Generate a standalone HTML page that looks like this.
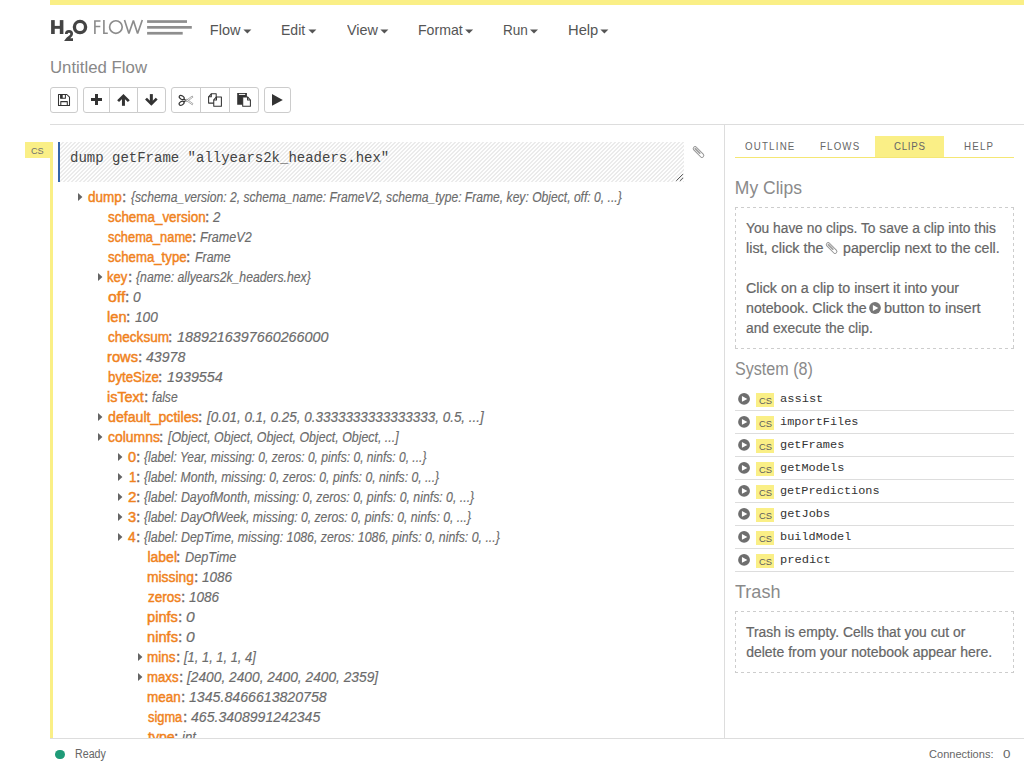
<!DOCTYPE html>
<html>
<head>
<meta charset="utf-8">
<title>H2O Flow</title>
<style>
*{box-sizing:border-box;margin:0;padding:0}
html,body{width:1024px;height:768px;overflow:hidden;background:#fff}
body{font-family:"Liberation Sans",sans-serif;color:#555;position:relative;font-size:14px}
.abs{position:absolute}
.s{position:absolute;white-space:nowrap;line-height:20px;height:20px;display:inline-block;transform-origin:0 0}
#topbar{left:50px;top:0;width:974px;height:5px;background:#faef86}
.btn{position:absolute;top:87px;height:26px;border:1px solid #ccc;background:#fff}
.btn.first{border-radius:3px 0 0 3px}
.btn.last{border-radius:0 3px 3px 0}
.btn.solo{border-radius:3px}
#hr1{left:50px;top:124px;width:974px;height:1px;background:#ddd}
#vr{left:724px;top:124px;width:1px;height:615px;background:#ddd}
#hr2{left:50px;top:738px;width:974px;height:1px;background:#ddd}
#cslabel{left:25px;top:142px;width:28px;height:16px;background:#faef86}
#csstrip{left:50px;top:142px;width:3px;height:596px;background:#faef86}
#bluebar{left:58px;top:142px;width:2px;height:40px;background:#3565a9}
#input{left:60px;top:142px;width:624px;height:40px;background:repeating-linear-gradient(135deg,#fefefe 0,#fefefe 1.7px,#ebebeb 1.7px,#ebebeb 2.83px)}
.tri{position:absolute;width:0;height:0;border-top:4px solid transparent;border-bottom:4px solid transparent;border-left:5px solid #555}
#tree{left:0;top:0;width:724px;height:738px;overflow:hidden}
#tabon{left:875px;top:136px;width:69px;height:21px;background:#faef86}
#tabline{left:735px;top:157px;width:279px;height:1px;background:#f5e774}
.dash{position:absolute;left:735px;width:280px;border:1px dashed #d2d2d2}
.li{position:absolute;left:735px;width:279px;height:23px;border-bottom:1px solid #ddd}
.li .cs{position:absolute;left:21px;top:5px;width:18px;height:14px;background:#faef86}
#dot{left:55px;top:749.5px;width:9.5px;height:9.5px;border-radius:5px;background:#1f9b78}
</style>
</head>
<body>
<div class="abs" id="topbar"></div>
<div class="btn solo" style="left:50px;width:28px"></div>
<div class="btn first" style="left:83px;width:27px"></div>
<div class="btn" style="left:109px;width:29px"></div>
<div class="btn last" style="left:137px;width:29px"></div>
<div class="btn first" style="left:171px;width:30px"></div>
<div class="btn" style="left:200px;width:30px"></div>
<div class="btn last" style="left:229px;width:30px"></div>
<div class="btn solo" style="left:264px;width:27px"></div>
<div class="abs" id="hr1"></div>
<div class="abs" id="vr"></div>
<div class="abs" id="hr2"></div>
<div class="abs" id="cslabel"></div>
<div class="abs" id="csstrip"></div>
<div class="abs" id="bluebar"></div>
<div class="abs" id="input"></div>
<div class="abs" id="tree">

<span class="s" style="top:186.73px;font-size:14px;color:#f0821c;-webkit-text-stroke:0.45px #f0821c;left:88.43px;transform:scaleX(0.9655);">dump</span>
<span class="s" style="top:186.73px;font-size:14px;color:#6b6b6b;-webkit-text-stroke:0.3px #6b6b6b;left:121.96px;transform:scaleX(1.1176);">:</span>
<span class="s" style="top:186.73px;font-size:14px;color:#6b6b6b;font-style:italic;-webkit-text-stroke:0.15px #6b6b6b;left:130.54px;transform:scaleX(0.8650);">{schema_version: 2, schema_name: FrameV2, schema_type: Frame, key: Object, off: 0, ...}</span>
<span class="s" style="top:206.73px;font-size:14px;color:#f0821c;-webkit-text-stroke:0.45px #f0821c;left:107.98px;transform:scaleX(0.9577);">schema_version</span>
<span class="s" style="top:206.73px;font-size:14px;color:#6b6b6b;-webkit-text-stroke:0.3px #6b6b6b;left:205.06px;transform:scaleX(1.1176);">:</span>
<span class="s" style="top:206.73px;font-size:14px;color:#6b6b6b;font-style:italic;-webkit-text-stroke:0.15px #6b6b6b;left:213.30px;transform:scaleX(0.9470);">2</span>
<span class="s" style="top:226.73px;font-size:14px;color:#f0821c;-webkit-text-stroke:0.45px #f0821c;left:107.99px;transform:scaleX(0.9173);">schema_name</span>
<span class="s" style="top:226.73px;font-size:14px;color:#6b6b6b;-webkit-text-stroke:0.3px #6b6b6b;left:191.96px;transform:scaleX(1.1176);">:</span>
<span class="s" style="top:226.73px;font-size:14px;color:#6b6b6b;font-style:italic;-webkit-text-stroke:0.15px #6b6b6b;left:200.29px;transform:scaleX(0.8977);">FrameV2</span>
<span class="s" style="top:246.74px;font-size:14px;color:#f0821c;-webkit-text-stroke:0.45px #f0821c;left:107.98px;transform:scaleX(0.9439);">schema_type</span>
<span class="s" style="top:246.74px;font-size:14px;color:#6b6b6b;-webkit-text-stroke:0.3px #6b6b6b;left:186.31px;transform:scaleX(1.1176);">:</span>
<span class="s" style="top:246.74px;font-size:14px;color:#6b6b6b;font-style:italic;-webkit-text-stroke:0.15px #6b6b6b;left:194.70px;transform:scaleX(0.8822);">Frame</span>
<span class="s" style="top:266.74px;font-size:14px;color:#f0821c;-webkit-text-stroke:0.45px #f0821c;left:107.46px;transform:scaleX(0.9331);">key</span>
<span class="s" style="top:266.74px;font-size:14px;color:#6b6b6b;-webkit-text-stroke:0.3px #6b6b6b;left:128.06px;transform:scaleX(1.1176);">:</span>
<span class="s" style="top:266.74px;font-size:14px;color:#6b6b6b;font-style:italic;-webkit-text-stroke:0.15px #6b6b6b;left:135.54px;transform:scaleX(0.8737);">{name: allyears2k_headers.hex}</span>
<span class="s" style="top:286.74px;font-size:14px;color:#f0821c;-webkit-text-stroke:0.45px #f0821c;left:107.72px;transform:scaleX(1.1291);">off</span>
<span class="s" style="top:286.74px;font-size:14px;color:#6b6b6b;-webkit-text-stroke:0.3px #6b6b6b;left:125.36px;transform:scaleX(1.1176);">:</span>
<span class="s" style="top:286.74px;font-size:14px;color:#6b6b6b;font-style:italic;-webkit-text-stroke:0.15px #6b6b6b;left:132.92px;transform:scaleX(0.9877);">0</span>
<span class="s" style="top:306.74px;font-size:14px;color:#f0821c;-webkit-text-stroke:0.45px #f0821c;left:107.38px;transform:scaleX(1.0451);">len</span>
<span class="s" style="top:306.74px;font-size:14px;color:#6b6b6b;-webkit-text-stroke:0.3px #6b6b6b;left:126.31px;transform:scaleX(1.1176);">:</span>
<span class="s" style="top:306.74px;font-size:14px;color:#6b6b6b;font-style:italic;-webkit-text-stroke:0.15px #6b6b6b;left:134.73px;transform:scaleX(0.9752);">100</span>
<span class="s" style="top:326.74px;font-size:14px;color:#f0821c;-webkit-text-stroke:0.45px #f0821c;left:107.78px;transform:scaleX(0.9673);">checksum</span>
<span class="s" style="top:326.74px;font-size:14px;color:#6b6b6b;-webkit-text-stroke:0.3px #6b6b6b;left:168.16px;transform:scaleX(1.1176);">:</span>
<span class="s" style="top:326.74px;font-size:14px;color:#6b6b6b;font-style:italic;-webkit-text-stroke:0.15px #6b6b6b;left:176.62px;transform:scaleX(1.0240);">1889216397660266000</span>
<span class="s" style="top:346.74px;font-size:14px;color:#f0821c;-webkit-text-stroke:0.45px #f0821c;left:107.38px;transform:scaleX(1.0486);">rows</span>
<span class="s" style="top:346.74px;font-size:14px;color:#6b6b6b;-webkit-text-stroke:0.3px #6b6b6b;left:138.16px;transform:scaleX(1.1176);">:</span>
<span class="s" style="top:346.74px;font-size:14px;color:#6b6b6b;font-style:italic;-webkit-text-stroke:0.15px #6b6b6b;left:146.26px;transform:scaleX(1.0091);">43978</span>
<span class="s" style="top:366.74px;font-size:14px;color:#f0821c;-webkit-text-stroke:0.45px #f0821c;left:107.52px;transform:scaleX(0.9482);">byteSize</span>
<span class="s" style="top:366.74px;font-size:14px;color:#6b6b6b;-webkit-text-stroke:0.3px #6b6b6b;left:158.16px;transform:scaleX(1.1176);">:</span>
<span class="s" style="top:366.74px;font-size:14px;color:#6b6b6b;font-style:italic;-webkit-text-stroke:0.15px #6b6b6b;left:166.62px;transform:scaleX(1.0224);">1939554</span>
<span class="s" style="top:386.74px;font-size:14px;color:#f0821c;-webkit-text-stroke:0.45px #f0821c;left:107.40px;transform:scaleX(1.0287);">isText</span>
<span class="s" style="top:386.74px;font-size:14px;color:#6b6b6b;-webkit-text-stroke:0.3px #6b6b6b;left:144.46px;transform:scaleX(1.1176);">:</span>
<span class="s" style="top:386.74px;font-size:14px;color:#6b6b6b;font-style:italic;-webkit-text-stroke:0.15px #6b6b6b;left:152.20px;transform:scaleX(0.8682);">false</span>
<span class="s" style="top:406.74px;font-size:14px;color:#f0821c;-webkit-text-stroke:0.45px #f0821c;left:107.76px;transform:scaleX(1.0123);">default_pctiles</span>
<span class="s" style="top:406.74px;font-size:14px;color:#6b6b6b;-webkit-text-stroke:0.3px #6b6b6b;left:198.16px;transform:scaleX(1.1176);">:</span>
<span class="s" style="top:406.74px;font-size:14px;color:#6b6b6b;font-style:italic;-webkit-text-stroke:0.15px #6b6b6b;left:206.59px;transform:scaleX(0.9610);">[0.01, 0.1, 0.25, 0.3333333333333333, 0.5, ...]</span>
<span class="s" style="top:426.74px;font-size:14px;color:#f0821c;-webkit-text-stroke:0.45px #f0821c;left:107.77px;transform:scaleX(0.9955);">columns</span>
<span class="s" style="top:426.74px;font-size:14px;color:#6b6b6b;-webkit-text-stroke:0.3px #6b6b6b;left:159.46px;transform:scaleX(1.1176);">:</span>
<span class="s" style="top:426.74px;font-size:14px;color:#6b6b6b;font-style:italic;-webkit-text-stroke:0.15px #6b6b6b;left:167.81px;transform:scaleX(0.8847);">[Object, Object, Object, Object, Object, ...]</span>
<span class="s" style="top:446.74px;font-size:14px;color:#f0821c;-webkit-text-stroke:0.45px #f0821c;left:127.83px;transform:scaleX(1.0359);">0</span>
<span class="s" style="top:446.74px;font-size:14px;color:#6b6b6b;-webkit-text-stroke:0.3px #6b6b6b;left:135.66px;transform:scaleX(1.1176);">:</span>
<span class="s" style="top:446.74px;font-size:14px;color:#6b6b6b;font-style:italic;-webkit-text-stroke:0.15px #6b6b6b;left:143.69px;transform:scaleX(0.8607);">{label: Year, missing: 0, zeros: 0, pinfs: 0, ninfs: 0, ...}</span>
<span class="s" style="top:466.74px;font-size:14px;color:#f0821c;-webkit-text-stroke:0.45px #f0821c;left:128.62px;transform:scaleX(0.9480);">1</span>
<span class="s" style="top:466.74px;font-size:14px;color:#6b6b6b;-webkit-text-stroke:0.3px #6b6b6b;left:135.66px;transform:scaleX(1.1176);">:</span>
<span class="s" style="top:466.74px;font-size:14px;color:#6b6b6b;font-style:italic;-webkit-text-stroke:0.15px #6b6b6b;left:143.69px;transform:scaleX(0.8700);">{label: Month, missing: 0, zeros: 0, pinfs: 0, ninfs: 0, ...}</span>
<span class="s" style="top:486.74px;font-size:14px;color:#f0821c;-webkit-text-stroke:0.45px #f0821c;left:127.58px;transform:scaleX(1.0885);">2</span>
<span class="s" style="top:486.74px;font-size:14px;color:#6b6b6b;-webkit-text-stroke:0.3px #6b6b6b;left:135.66px;transform:scaleX(1.1176);">:</span>
<span class="s" style="top:486.74px;font-size:14px;color:#6b6b6b;font-style:italic;-webkit-text-stroke:0.15px #6b6b6b;left:143.69px;transform:scaleX(0.8784);">{label: DayofMonth, missing: 0, zeros: 0, pinfs: 0, ninfs: 0, ...}</span>
<span class="s" style="top:506.74px;font-size:14px;color:#f0821c;-webkit-text-stroke:0.45px #f0821c;left:127.82px;transform:scaleX(1.0460);">3</span>
<span class="s" style="top:506.74px;font-size:14px;color:#6b6b6b;-webkit-text-stroke:0.3px #6b6b6b;left:135.66px;transform:scaleX(1.1176);">:</span>
<span class="s" style="top:506.74px;font-size:14px;color:#6b6b6b;font-style:italic;-webkit-text-stroke:0.15px #6b6b6b;left:143.69px;transform:scaleX(0.8707);">{label: DayOfWeek, missing: 0, zeros: 0, pinfs: 0, ninfs: 0, ...}</span>
<span class="s" style="top:526.74px;font-size:14px;color:#f0821c;-webkit-text-stroke:0.45px #f0821c;left:128.05px;transform:scaleX(0.9881);">4</span>
<span class="s" style="top:526.74px;font-size:14px;color:#6b6b6b;-webkit-text-stroke:0.3px #6b6b6b;left:135.66px;transform:scaleX(1.1176);">:</span>
<span class="s" style="top:526.74px;font-size:14px;color:#6b6b6b;font-style:italic;-webkit-text-stroke:0.15px #6b6b6b;left:143.69px;transform:scaleX(0.8813);">{label: DepTime, missing: 1086, zeros: 1086, pinfs: 0, ninfs: 0, ...}</span>
<span class="s" style="top:546.74px;font-size:14px;color:#f0821c;-webkit-text-stroke:0.45px #f0821c;left:147.42px;">label</span>
<span class="s" style="top:546.74px;font-size:14px;color:#6b6b6b;-webkit-text-stroke:0.3px #6b6b6b;left:176.31px;transform:scaleX(1.1176);">:</span>
<span class="s" style="top:546.74px;font-size:14px;color:#6b6b6b;font-style:italic;-webkit-text-stroke:0.15px #6b6b6b;left:185.29px;transform:scaleX(0.9062);">DepTime</span>
<span class="s" style="top:566.74px;font-size:14px;color:#f0821c;-webkit-text-stroke:0.45px #f0821c;left:147.42px;transform:scaleX(0.9894);">missing</span>
<span class="s" style="top:566.74px;font-size:14px;color:#6b6b6b;-webkit-text-stroke:0.3px #6b6b6b;left:193.81px;transform:scaleX(1.1176);">:</span>
<span class="s" style="top:566.74px;font-size:14px;color:#6b6b6b;font-style:italic;-webkit-text-stroke:0.15px #6b6b6b;left:202.23px;transform:scaleX(0.9678);">1086</span>
<span class="s" style="top:586.74px;font-size:14px;color:#f0821c;-webkit-text-stroke:0.45px #f0821c;left:147.78px;transform:scaleX(0.9663);">zeros</span>
<span class="s" style="top:586.74px;font-size:14px;color:#6b6b6b;-webkit-text-stroke:0.3px #6b6b6b;left:180.66px;transform:scaleX(1.1176);">:</span>
<span class="s" style="top:586.74px;font-size:14px;color:#6b6b6b;font-style:italic;-webkit-text-stroke:0.15px #6b6b6b;left:189.13px;transform:scaleX(0.9678);">1086</span>
<span class="s" style="top:606.74px;font-size:14px;color:#f0821c;-webkit-text-stroke:0.45px #f0821c;left:147.46px;transform:scaleX(1.0456);">pinfs</span>
<span class="s" style="top:606.74px;font-size:14px;color:#6b6b6b;-webkit-text-stroke:0.3px #6b6b6b;left:178.16px;transform:scaleX(1.1176);">:</span>
<span class="s" style="top:606.74px;font-size:14px;color:#6b6b6b;font-style:italic;-webkit-text-stroke:0.15px #6b6b6b;left:185.71px;transform:scaleX(1.1180);">0</span>
<span class="s" style="top:626.74px;font-size:14px;color:#f0821c;-webkit-text-stroke:0.45px #f0821c;left:147.38px;transform:scaleX(1.0481);">ninfs</span>
<span class="s" style="top:626.74px;font-size:14px;color:#6b6b6b;-webkit-text-stroke:0.3px #6b6b6b;left:178.16px;transform:scaleX(1.1176);">:</span>
<span class="s" style="top:626.74px;font-size:14px;color:#6b6b6b;font-style:italic;-webkit-text-stroke:0.15px #6b6b6b;left:185.71px;transform:scaleX(1.1180);">0</span>
<span class="s" style="top:646.74px;font-size:14px;color:#f0821c;-webkit-text-stroke:0.45px #f0821c;left:147.44px;transform:scaleX(0.9612);">mins</span>
<span class="s" style="top:646.74px;font-size:14px;color:#6b6b6b;-webkit-text-stroke:0.3px #6b6b6b;left:175.66px;transform:scaleX(1.1176);">:</span>
<span class="s" style="top:646.74px;font-size:14px;color:#6b6b6b;font-style:italic;-webkit-text-stroke:0.15px #6b6b6b;left:184.08px;transform:scaleX(0.9228);">[1, 1, 1, 1, 4]</span>
<span class="s" style="top:666.74px;font-size:14px;color:#f0821c;-webkit-text-stroke:0.45px #f0821c;left:147.45px;transform:scaleX(0.9431);">maxs</span>
<span class="s" style="top:666.74px;font-size:14px;color:#6b6b6b;-webkit-text-stroke:0.3px #6b6b6b;left:178.81px;transform:scaleX(1.1176);">:</span>
<span class="s" style="top:666.74px;font-size:14px;color:#6b6b6b;font-style:italic;-webkit-text-stroke:0.15px #6b6b6b;left:186.60px;transform:scaleX(0.9820);">[2400, 2400, 2400, 2400, 2359]</span>
<span class="s" style="top:686.74px;font-size:14px;color:#f0821c;-webkit-text-stroke:0.45px #f0821c;left:147.44px;transform:scaleX(0.9643);">mean</span>
<span class="s" style="top:686.74px;font-size:14px;color:#6b6b6b;-webkit-text-stroke:0.3px #6b6b6b;left:180.66px;transform:scaleX(1.1176);">:</span>
<span class="s" style="top:686.74px;font-size:14px;color:#6b6b6b;font-style:italic;-webkit-text-stroke:0.15px #6b6b6b;left:189.12px;transform:scaleX(1.0107);">1345.8466613820758</span>
<span class="s" style="top:706.74px;font-size:14px;color:#f0821c;-webkit-text-stroke:0.45px #f0821c;left:147.99px;transform:scaleX(0.9174);">sigma</span>
<span class="s" style="top:706.74px;font-size:14px;color:#6b6b6b;-webkit-text-stroke:0.3px #6b6b6b;left:182.56px;transform:scaleX(1.1176);">:</span>
<span class="s" style="top:706.74px;font-size:14px;color:#6b6b6b;font-style:italic;-webkit-text-stroke:0.15px #6b6b6b;left:191.26px;transform:scaleX(1.0058);">465.3408991242345</span>
<span class="s" style="top:726.74px;font-size:14px;color:#f0821c;-webkit-text-stroke:0.45px #f0821c;left:148.02px;transform:scaleX(1.0105);">type</span>
<span class="s" style="top:726.74px;font-size:14px;color:#6b6b6b;-webkit-text-stroke:0.3px #6b6b6b;left:174.46px;transform:scaleX(1.1176);">:</span>
<span class="s" style="top:726.74px;font-size:14px;color:#6b6b6b;font-style:italic;-webkit-text-stroke:0.15px #6b6b6b;left:182.37px;transform:scaleX(0.9445);">int</span>
</div>
<div class="abs" id="tabon"></div>
<div class="abs" id="tabline"></div>
<div class="li" style="top:388px"><i class="cs"></i></div>
<div class="li" style="top:411px"><i class="cs"></i></div>
<div class="li" style="top:434px"><i class="cs"></i></div>
<div class="li" style="top:457px"><i class="cs"></i></div>
<div class="li" style="top:480px"><i class="cs"></i></div>
<div class="li" style="top:503px"><i class="cs"></i></div>
<div class="li" style="top:526px"><i class="cs"></i></div>
<div class="li" style="top:549px"><i class="cs"></i></div>
<div class="abs" id="dot"></div>
<span class="s" style="top:19.96px;font-size:14.5px;color:#555;left:209.84px;">Flow</span>
<span class="s" style="top:19.96px;font-size:14.5px;color:#555;left:280.88px;transform:scaleX(0.9670);">Edit</span>
<span class="s" style="top:19.96px;font-size:14.5px;color:#555;left:346.50px;transform:scaleX(0.9933);">View</span>
<span class="s" style="top:19.96px;font-size:14.5px;color:#555;left:417.87px;transform:scaleX(0.9727);">Format</span>
<span class="s" style="top:19.96px;font-size:14.5px;color:#555;left:502.91px;transform:scaleX(0.9367);">Run</span>
<span class="s" style="top:19.96px;font-size:14.5px;color:#555;left:567.82px;transform:scaleX(1.0155);">Help</span>
<span class="s" style="top:56.77px;font-size:17.2px;color:#888;left:49.99px;transform:scaleX(0.9764);">Untitled Flow</span>
<span class="s" style="top:140.77px;font-size:9.3px;color:#707070;left:31.44px;transform:scaleX(0.9864);">CS</span>
<span class="s" style="top:148.25px;font-size:14px;color:#444;font-family:'Liberation Mono',monospace;left:69.99px;">dump getFrame "allyears2k_headers.hex"</span>
<span class="s" style="top:136.45px;font-size:10.8px;color:#666;left:744.56px;letter-spacing:1.337px;transform:scaleX(0.9);">OUTLINE</span>
<span class="s" style="top:136.45px;font-size:10.8px;color:#666;left:819.72px;letter-spacing:1.285px;transform:scaleX(0.9);">FLOWS</span>
<span class="s" style="top:136.45px;font-size:10.8px;color:#666;left:894.01px;letter-spacing:0.778px;transform:scaleX(0.9);">CLIPS</span>
<span class="s" style="top:136.45px;font-size:10.8px;color:#666;left:964.22px;letter-spacing:1.367px;transform:scaleX(0.9);">HELP</span>
<span class="s" style="top:178.02px;font-size:17.5px;color:#8a8a8a;left:734.85px;">My Clips</span>
<span class="s" style="top:358.92px;font-size:17.5px;color:#8a8a8a;left:735.02px;transform:scaleX(0.9210);">System (8)</span>
<span class="s" style="top:582.02px;font-size:17.5px;color:#8a8a8a;left:734.89px;transform:scaleX(1.0313);">Trash</span>
<span class="s" style="top:218.23px;font-size:14px;color:#666;-webkit-text-stroke:0.2px #666;left:746.22px;transform:scaleX(0.9846);">You have no clips. To save a clip into this</span>
<span class="s" style="top:238.13px;font-size:14px;color:#666;-webkit-text-stroke:0.2px #666;left:745.97px;transform:scaleX(1.0273);">list, click the</span>
<span class="s" style="top:238.13px;font-size:14px;color:#666;-webkit-text-stroke:0.2px #666;left:843.05px;transform:scaleX(1.0118);">paperclip next to the cell.</span>
<span class="s" style="top:278.13px;font-size:14px;color:#666;-webkit-text-stroke:0.2px #666;left:745.99px;transform:scaleX(1.0219);">Click on a clip to insert it into your</span>
<span class="s" style="top:298.13px;font-size:14px;color:#666;-webkit-text-stroke:0.2px #666;left:745.78px;transform:scaleX(1.0137);">notebook. Click the</span>
<span class="s" style="top:298.13px;font-size:14px;color:#666;-webkit-text-stroke:0.2px #666;left:884.13px;transform:scaleX(1.0431);">button to insert</span>
<span class="s" style="top:318.13px;font-size:14px;color:#666;-webkit-text-stroke:0.2px #666;left:746.15px;transform:scaleX(0.9871);">and execute the clip.</span>
<span class="s" style="top:622.13px;font-size:14px;color:#666;-webkit-text-stroke:0.2px #666;left:746.32px;transform:scaleX(0.9888);">Trash is empty. Cells that you cut or</span>
<span class="s" style="top:642.13px;font-size:14px;color:#666;-webkit-text-stroke:0.2px #666;left:746.14px;">delete from your notebook appear here.</span>
<span class="s" style="top:388.80px;font-size:11.2px;color:#333;font-family:'Liberation Mono',monospace;left:779.98px;transform:scaleX(1.0759);">assist</span>
<span class="s" style="top:390.79px;font-size:9.8px;color:#5e5e5e;left:758.63px;transform:scaleX(0.9597);">CS</span>
<span class="s" style="top:411.80px;font-size:11.2px;color:#333;font-family:'Liberation Mono',monospace;left:779.93px;transform:scaleX(1.0616);">importFiles</span>
<span class="s" style="top:413.79px;font-size:9.8px;color:#5e5e5e;left:758.63px;transform:scaleX(0.9597);">CS</span>
<span class="s" style="top:434.80px;font-size:11.2px;color:#333;font-family:'Liberation Mono',monospace;left:779.93px;transform:scaleX(1.0641);">getFrames</span>
<span class="s" style="top:436.79px;font-size:9.8px;color:#5e5e5e;left:758.63px;transform:scaleX(0.9597);">CS</span>
<span class="s" style="top:457.80px;font-size:11.2px;color:#333;font-family:'Liberation Mono',monospace;left:779.93px;transform:scaleX(1.0641);">getModels</span>
<span class="s" style="top:459.79px;font-size:9.8px;color:#5e5e5e;left:758.63px;transform:scaleX(0.9597);">CS</span>
<span class="s" style="top:480.80px;font-size:11.2px;color:#333;font-family:'Liberation Mono',monospace;left:779.93px;transform:scaleX(1.0592);">getPredictions</span>
<span class="s" style="top:482.79px;font-size:9.8px;color:#5e5e5e;left:758.63px;transform:scaleX(0.9597);">CS</span>
<span class="s" style="top:503.80px;font-size:11.2px;color:#333;font-family:'Liberation Mono',monospace;left:779.92px;transform:scaleX(1.0682);">getJobs</span>
<span class="s" style="top:505.79px;font-size:9.8px;color:#5e5e5e;left:758.63px;transform:scaleX(0.9597);">CS</span>
<span class="s" style="top:526.80px;font-size:11.2px;color:#333;font-family:'Liberation Mono',monospace;left:779.69px;transform:scaleX(1.0618);">buildModel</span>
<span class="s" style="top:528.79px;font-size:9.8px;color:#5e5e5e;left:758.63px;transform:scaleX(0.9597);">CS</span>
<span class="s" style="top:549.80px;font-size:11.2px;color:#333;font-family:'Liberation Mono',monospace;left:779.67px;transform:scaleX(1.0788);">predict</span>
<span class="s" style="top:551.79px;font-size:9.8px;color:#5e5e5e;left:758.63px;transform:scaleX(0.9597);">CS</span>
<span class="s" style="top:744.23px;font-size:12px;color:#666;left:74.65px;transform:scaleX(0.8895);">Ready</span>
<span class="s" style="top:744.00px;font-size:11.8px;color:#666;left:928.95px;transform:scaleX(0.9368);">Connections:</span>
<span class="s" style="top:744.00px;font-size:11.8px;color:#666;left:1002.53px;transform:scaleX(1.1358);">0</span>
<svg class="abs" style="left:0;top:0" width="1024" height="768" viewBox="0 0 1024 768"><g transform="translate(58 94)" fill="none" stroke="#333" stroke-width="1.05" stroke-linejoin="round"><path d="M0.5 0.5 H8.8 L11.5 3.2 V11.5 H0.5 Z"/><path d="M2.6 0.5 V4.3 H7.4 V0.5"/><rect x="2.6" y="0.5" width="2.1" height="3.8" fill="#333" stroke="none"/><rect x="2.8" y="7.6" width="6.5" height="3.9"/></g>
<path d="M91 98 H95 V94.1 H98 V98 H102 V101 H98 V105 H95 V101 H91 Z" fill="#333"/>
<g fill="none" stroke="#333" stroke-width="2.7"><path d="M118.1 101.1 L123.45 95.8 L128.8 101.1"/><path d="M123.45 96.5 V105.8" stroke-width="3"/></g>
<g fill="none" stroke="#333" stroke-width="2.7"><path d="M146.0 98.6 L151.35 103.9 L156.7 98.6"/><path d="M151.35 94.1 V103.4" stroke-width="3"/></g>
<g fill="none" stroke="#333" stroke-width="1.15"><ellipse cx="181.7" cy="97.5" rx="2.7" ry="1.7" transform="rotate(32 181.7 97.5)"/><ellipse cx="181.6" cy="103.3" rx="2.7" ry="1.7" transform="rotate(-32 181.6 103.3)"/><path d="M183.8 98.9 L186.3 100.6 M183.7 101.9 L186.3 100.2"/></g><g fill="#fff" stroke="#777" stroke-width="0.6" stroke-linejoin="round"><path d="M185.4 100.9 L192.3 96 L192.9 97.2 L186.9 101.6 Z"/><path d="M185.4 99.9 L192.3 104.8 L192.9 103.6 L186.9 99.2 Z"/></g>
<g fill="#fff" stroke="#333" stroke-width="1.05" stroke-linejoin="round"><path d="M211.3 93.8 H216.2 V103.1 H208.6 V96.8 Z"/><path d="M211.3 93.8 V96.8 H208.6" fill="none"/><path d="M216.5 96.9 H221.4 V106.25 H213.75 V99.9 Z"/><path d="M216.5 96.9 V99.9 H213.75" fill="none"/></g>
<rect x="237.2" y="93" width="9.7" height="11.75" fill="#333"/><rect x="238.9" y="93.9" width="6.3" height="1" fill="#fff"/><g fill="#fff" stroke="#333" stroke-width="1.05" stroke-linejoin="round"><path d="M242.7 96.9 H247.6 L250.4 100 V106.25 H242.7 Z"/><path d="M247.6 96.9 V100 H250.4" fill="none"/></g>
<path d="M272 94 L282.8 99.9 L272 105.8 Z" fill="#333"/>
<g transform="translate(698.5 152) rotate(45)" fill="none" stroke="#929292" stroke-width="0.95"><rect x="-6.7" y="-1.9" width="13.4" height="3.8" rx="1.9"/><path d="M-4.5 -0.1 H1.6" stroke-width="1.9" stroke="#a4a4a4" stroke-linecap="round"/></g>
<g transform="translate(831.6 248) rotate(45)" fill="none" stroke="#929292" stroke-width="0.95"><rect x="-6.7" y="-1.9" width="13.4" height="3.8" rx="1.9"/><path d="M-4.5 -0.1 H1.6" stroke-width="1.9" stroke="#a4a4a4" stroke-linecap="round"/></g>
<circle cx="875" cy="308" r="5.9" fill="#777"/><path d="M872.9 305.1 L878.3 308 L872.9 310.9 Z" fill="#fff"/>
<circle cx="744.05" cy="398.9" r="5.9" fill="#6e6e6e"/><path d="M741.9499999999999 396.0 L747.3499999999999 398.9 L741.9499999999999 401.79999999999995 Z" fill="#fff"/>
<circle cx="744.05" cy="421.9" r="5.9" fill="#6e6e6e"/><path d="M741.9499999999999 419.0 L747.3499999999999 421.9 L741.9499999999999 424.79999999999995 Z" fill="#fff"/>
<circle cx="744.05" cy="444.9" r="5.9" fill="#6e6e6e"/><path d="M741.9499999999999 442.0 L747.3499999999999 444.9 L741.9499999999999 447.79999999999995 Z" fill="#fff"/>
<circle cx="744.05" cy="467.9" r="5.9" fill="#6e6e6e"/><path d="M741.9499999999999 465.0 L747.3499999999999 467.9 L741.9499999999999 470.79999999999995 Z" fill="#fff"/>
<circle cx="744.05" cy="490.9" r="5.9" fill="#6e6e6e"/><path d="M741.9499999999999 488.0 L747.3499999999999 490.9 L741.9499999999999 493.79999999999995 Z" fill="#fff"/>
<circle cx="744.05" cy="513.9" r="5.9" fill="#6e6e6e"/><path d="M741.9499999999999 511.0 L747.3499999999999 513.9 L741.9499999999999 516.8 Z" fill="#fff"/>
<circle cx="744.05" cy="536.9" r="5.9" fill="#6e6e6e"/><path d="M741.9499999999999 534.0 L747.3499999999999 536.9 L741.9499999999999 539.8 Z" fill="#fff"/>
<circle cx="744.05" cy="559.9" r="5.9" fill="#6e6e6e"/><path d="M741.9499999999999 557.0 L747.3499999999999 559.9 L741.9499999999999 562.8 Z" fill="#fff"/>
<g fill="#444"><rect x="51.1" y="20.1" width="3.65" height="13.9"/><rect x="59.8" y="20.1" width="3.6" height="13.9"/><rect x="54" y="25.9" width="6.5" height="2.9"/></g><path d="M66.3 34 C66.3 30.6 71.7 30.6 71.7 34 C71.7 36.3 68.5 37.3 66.8 39.55 H73" fill="none" stroke="#444" stroke-width="2.7"/><circle cx="80.0" cy="27.05" r="5.6" fill="none" stroke="#444" stroke-width="3.35"/><g fill="none" stroke="#8c8c8c" stroke-width="1.65"><path d="M94.9 34 V20.95 H100.5 M94.9 26.5 H100.3"/><path d="M103.9 20.1 V33.2 H107.8"/><circle cx="115.9" cy="27" r="6.3"/><path d="M124.5 20.1 L128.9 33.5 L133.4 20.5 L137.6 33.5 L142.3 20.1" stroke-linejoin="bevel"/></g><g fill="#8e8e8e"><rect x="147.1" y="20.2" width="39.9" height="2.7"/><rect x="147.1" y="26" width="44.7" height="2.7"/><rect x="147.1" y="31.9" width="35.6" height="2.7"/></g>
<path d="M78 193.1 L82.4 197.0 L78 200.9 Z" fill="#646464"/>
<path d="M98 273.1 L102.4 277.0 L98 280.9 Z" fill="#646464"/>
<path d="M98 413.1 L102.4 417.0 L98 420.9 Z" fill="#646464"/>
<path d="M98 433.1 L102.4 437.0 L98 440.9 Z" fill="#646464"/>
<path d="M118 453.1 L122.4 457.0 L118 460.9 Z" fill="#646464"/>
<path d="M118 473.1 L122.4 477.0 L118 480.9 Z" fill="#646464"/>
<path d="M118 493.1 L122.4 497.0 L118 500.9 Z" fill="#646464"/>
<path d="M118 513.1 L122.4 517.0 L118 520.9 Z" fill="#646464"/>
<path d="M118 533.1 L122.4 537.0 L118 540.9 Z" fill="#646464"/>
<path d="M138 653.1 L142.4 657.0 L138 660.9 Z" fill="#646464"/>
<path d="M138 673.1 L142.4 677.0 L138 680.9 Z" fill="#646464"/>
<g stroke="#cdcdcd" stroke-width="1" stroke-dasharray="3 3" fill="none"><path d="M735 207.5 H1014"/><path d="M735 348.5 H1014"/><path d="M735.5 207 V349"/><path d="M1013.5 207 V349"/></g>
<g stroke="#cdcdcd" stroke-width="1" stroke-dasharray="3 3" fill="none"><path d="M735 611.5 H1014"/><path d="M735 672.5 H1014"/><path d="M735.5 611 V673"/><path d="M1013.5 611 V673"/></g>
<path d="M243.4 29.4 h8 l-4 4 Z" fill="#555"/>
<path d="M308.4 29.4 h8 l-4 4 Z" fill="#555"/>
<path d="M380.4 29.4 h8 l-4 4 Z" fill="#555"/>
<path d="M465.09999999999997 29.4 h8 l-4 4 Z" fill="#555"/>
<path d="M530.0 29.4 h8 l-4 4 Z" fill="#555"/>
<path d="M600.4 29.4 h8 l-4 4 Z" fill="#555"/>
<path d="M676.3 180.7 L682.8 174.2 M679.9 180.9 L683 177.8" stroke="#555" stroke-width="1" fill="none"/></svg>
</body>
</html>
